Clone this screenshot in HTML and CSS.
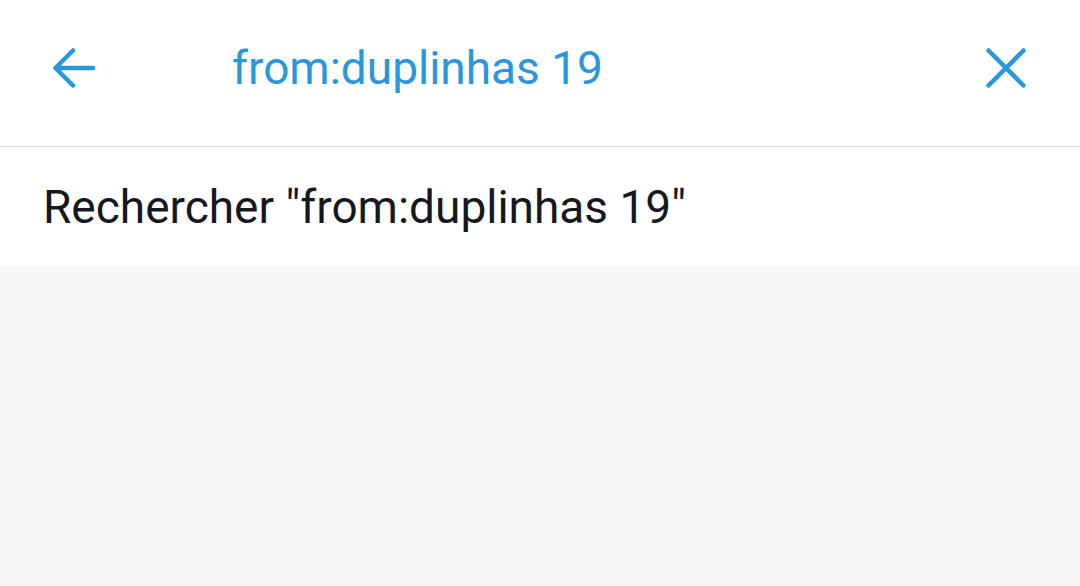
FILE: index.html
```html
<!DOCTYPE html>
<html lang="fr">
<head>
<meta charset="utf-8">
<link rel="stylesheet" href="styles.css">
</head>
<body>
<div class="app">
  <header class="topbar">
    <button class="icon-btn back" aria-label="Retour">
      <svg width="42" height="42" viewBox="0 0 42 42" fill="none" stroke="currentColor" stroke-width="4.5" stroke-linecap="round" stroke-linejoin="round">
        <path d="M40 21H3M20 3.5L2.5 21L20 38.5"/>
      </svg>
    </button>
    <div class="query">from:duplinhas 19</div>
    <button class="icon-btn close" aria-label="Effacer">
      <svg width="40" height="40" viewBox="0 0 40 40" fill="none" stroke="currentColor" stroke-width="4.5" stroke-linecap="round">
        <path d="M2.5 2.5L37.5 37.5M37.5 2.5L2.5 37.5"/>
      </svg>
    </button>
  </header>
  <div class="suggestion">Rechercher "from:duplinhas 19"</div>
  <main class="rest"></main>
</div>
</body>
</html>
```
FILE: styles.css
```css
html, body {
  margin: 0;
  padding: 0;
  height: 100%;
}
body {
  font-family: Roboto, "Noto Sans", sans-serif;
  background: #f5f7f9;
}
.app {
  display: flex;
  flex-direction: column;
  height: 100%;
}
.topbar {
  box-sizing: border-box;
  height: 147px;
  background: #ffffff;
  border-bottom: 1px solid #d4d6d8;
  display: flex;
  align-items: center;
  padding: 0 0 11px 0;
  color: #2a96dc;
}
.icon-btn {
  background: none;
  border: none;
  padding: 0;
  color: inherit;
  display: flex;
  align-items: center;
  justify-content: center;
}
.back {
  margin-left: 53px;
  width: 42px;
  height: 42px;
}
.query {
  margin-left: 137px;
  flex: 1;
  font-size: 46px;
  color: #2a96dc;
}
.close {
  margin-right: 54px;
  width: 40px;
  height: 40px;
}
.suggestion {
  background: #ffffff;
  height: 119px;
  display: flex;
  align-items: center;
  padding-left: 43px;
  font-size: 46px;
  color: #15191d;
}
.rest {
  flex: 1;
}
```
